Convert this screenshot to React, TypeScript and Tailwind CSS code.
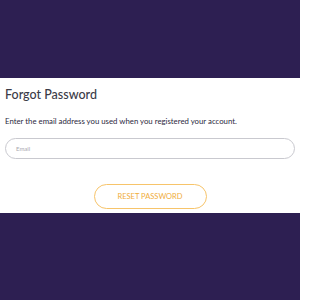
import React from 'react';

export default function App() {
    return (
        <div
            className="w-[300px] h-[300px] bg-[#2d1f52] flex flex-col"
            style={{ fontFamily: "Lato, 'Open Sans', sans-serif" }}
        >
            <div className="h-[78px] shrink-0" />
            {/* Forgot password panel */}
            <div className="bg-white h-[135px] px-[5px] pt-[9px]">
                <h1 className="text-[12.5px] leading-[16px] text-[#3b3b47] font-medium">Forgot Password</h1>
                <p className="mt-[12px] text-[7.8px] leading-[12px] text-[#2b2940]">
                    Enter the email address you used when you registered your account.
                </p>
                <div className="mt-[11px] h-[21px] w-[290px] rounded-full border border-[#c9c9cf] flex items-center px-[10px]">
                    <span className="text-[6px] text-[#a8a8b0]">Email</span>
                </div>
                <div className="mt-[25px] flex justify-center">
                    <button className="w-[113px] h-[25px] rounded-full border border-[#f7c46a] text-[#f0ad3c] text-[7.5px] uppercase">
                        Reset Password
                    </button>
                </div>
            </div>
        </div>
    );
}
